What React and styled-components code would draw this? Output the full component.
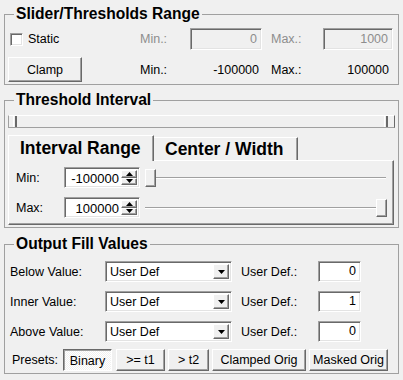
import React from 'react';
import styled, { createGlobalStyle, css } from 'styled-components';

const Global = createGlobalStyle`
  html, body { margin: 0; padding: 0; background: #f0f0f0; }
  body {
    font-family: "Liberation Sans", Arial, sans-serif;
    font-size: 12.5px;
    color: #000;
  }
`;

const Page = styled.div`
  width: 403px;
  height: 380px;
  box-sizing: border-box;
  padding: 6px 4px 0 4px;
  display: flex;
  flex-direction: column;
`;

const Group = styled.fieldset`
  margin: ${p => p.$top || 0}px 0 0 0;
  padding: 0;
  min-width: 0;
  border: 1px solid #a0a0a0;
`;

const Title = styled.legend`
  margin-left: 9px;
  padding: 0 2px;
  font-size: 15.6px;
  font-weight: bold;
  line-height: 16px;
`;

/* ---------- group 1 ---------- */
const RangeGrid = styled.div`
  display: grid;
  grid-template-columns: 132px 50px 72px 9px 52px 70px;
  grid-template-rows: 22px 25px;
  row-gap: 7px;
  align-items: center;
  padding: 6px 0 2px 3px;
`;

const CheckRow = styled.label`
  display: flex;
  align-items: center;
  gap: 5px;
  padding-left: 2px;
`;

const CheckBox = styled.span`
  width: 13px;
  height: 13px;
  box-sizing: border-box;
  background: #fff;
  border: 1px solid;
  border-color: #a0a0a0 #fff #fff #a0a0a0;
  box-shadow: inset 1px 1px 0 #696969, inset -1px -1px 0 #e3e3e3;
`;

const Label = styled.span`
  color: ${p => (p.$disabled ? '#8d8d8d' : '#000')};
  grid-column: ${p => p.$col || 'auto'};
  white-space: nowrap;
`;

const Value = styled.span`
  grid-column: ${p => p.$col || 'auto'};
  text-align: right;
  padding-right: ${p => p.$pr || 3}px;
`;

const sunken = css`
  box-sizing: border-box;
  border: 1px solid;
  border-color: #a0a0a0 #fff #fff #a0a0a0;
  box-shadow: inset 1px 1px 0 #696969, inset -1px -1px 0 #e3e3e3;
`;

const raised = css`
  box-sizing: border-box;
  background: #f0f0f0;
  border: 1px solid;
  border-color: #fff #696969 #696969 #fff;
  box-shadow: inset -1px -1px 0 #a0a0a0;
`;

const Field = styled.div`
  ${sunken};
  grid-column: ${p => p.$col || 'auto'};
  width: ${p => p.$w}px;
  height: ${p => p.$h || 22}px;
  background: ${p => (p.$disabled ? '#f0f0f0' : '#fff')};
  color: ${p => (p.$disabled ? '#8d8d8d' : '#000')};
  text-align: right;
  padding-right: 4px;
  line-height: ${p => (p.$h || 22) - 2}px;
`;

const Button = styled.button`
  ${raised};
  width: ${p => p.$w}px;
  height: ${p => p.$h || 22}px;
  margin-right: ${p => p.$mr || 0}px;
  padding: 0;
  font: inherit;
  color: #000;
  ${p =>
    p.$pressed &&
    css`
      border-color: #696969 #fff #fff #696969;
      box-shadow: inset 1px 1px 0 #a0a0a0;
      background: repeating-conic-gradient(#fff 0 25%, #f0f0f0 0 50%) 0 0 / 2px 2px;
      padding-top: 2px;
    `}
`;

/* ---------- group 2 ---------- */
const IntervalBody = styled.div`
  display: flex;
  flex-direction: column;
  padding: 7px 3px 2px 3px;
`;

const SpanTrack = styled.div`
  display: flex;
  height: 13px;
  box-sizing: border-box;
  border-top: 1px solid #fff;
  border-bottom: 1px solid #a0a0a0;
  border-left: 1px solid #a0a0a0;
  border-right: 1px solid #696969;
  margin-bottom: 7px;
`;

const SpanGap = styled.div`
  width: ${p => p.$w}px;
`;

const SpanFill = styled.div`
  flex: 1;
`;

const SpanHandle = styled.div`
  width: 4px;
  box-sizing: border-box;
  border-left: 1px solid #fff;
  border-right: 2px solid #696969;
`;

const TabBar = styled.div`
  display: flex;
  align-items: flex-end;
  height: 25px;
  position: relative;
  z-index: 1;
`;

const Tab = styled.div`
  box-sizing: border-box;
  height: ${p => (p.$active ? 26 : 23)}px;
  margin-bottom: ${p => (p.$active ? -1 : 0)}px;
  width: ${p => p.$w}px;
  padding-left: 11px;
  background: #f0f0f0;
  border-top: 1px solid #fff;
  border-left: ${p => (p.$active ? '1px solid #fff' : 'none')};
  border-right: 1px solid #696969;
  box-shadow: inset -1px 0 0 #a0a0a0;
  font-size: 17.5px;
  font-weight: bold;
  line-height: ${p => (p.$active ? 25 : 22)}px;
  white-space: nowrap;
`;

const Pane = styled.div`
  margin-right: 1px;
  display: flex;
  flex-direction: column;
  gap: 9px;
  padding: 6px 6px 6px 7px;
  border: 1px solid;
  border-color: #fff #696969 #696969 #fff;
  box-shadow: inset -1px -1px 0 #a0a0a0;
`;

const PaneRow = styled.div`
  display: grid;
  grid-template-columns: 48px 76px 1fr;
  align-items: center;
  height: 21px;
`;

const Spin = styled.div`
  ${sunken};
  display: flex;
  width: 76px;
  height: 21px;
  background: #fff;
  padding: 2px;
`;

const SpinText = styled.span`
  flex: 1;
  text-align: right;
  padding-right: 2px;
  font-size: 13px;
  line-height: 17px;
`;

const SpinButtons = styled.div`
  display: flex;
  flex-direction: column;
  width: 16px;
`;

const SpinButton = styled.div`
  ${raised};
  flex: 1;
  display: flex;
  align-items: center;
  justify-content: center;
`;

const Slider = styled.div`
  display: flex;
  align-items: center;
  height: 21px;
  margin-left: 5px;
  margin-right: ${p => (p.$end ? 0 : 1)}px;
`;

const Groove = styled.div`
  flex: 1;
  height: 2px;
  box-sizing: border-box;
  border-top: 1px solid #a0a0a0;
  border-bottom: 1px solid #fff;
`;

const Handle = styled.div`
  ${raised};
  width: 11px;
  height: 18px;
`;

/* ---------- group 3 ---------- */
const FillBody = styled.div`
  display: flex;
  flex-direction: column;
  gap: 9px;
  padding: 9px 0 2px 5px;
`;

const FillRow = styled.div`
  display: grid;
  grid-template-columns: 95px 127px 9px 77px 43px;
  align-items: center;
  height: 21px;
`;

const Combo = styled.div`
  ${sunken};
  display: flex;
  width: 127px;
  height: 21px;
  background: #fff;
  padding: 2px;
`;

const ComboText = styled.span`
  flex: 1;
  padding-left: 2px;
  line-height: 17px;
`;

const ComboButton = styled.div`
  ${raised};
  width: 16px;
  display: flex;
  align-items: center;
  justify-content: center;
`;

const PresetRow = styled.div`
  display: flex;
  align-items: center;
  gap: 3px;
  margin-top: -2px;
  padding-left: 2px;
`;

const PresetLabel = styled.span`
  width: 48px;
`;

const Arrow = ({ up }) => (
  <svg width="7" height="4" viewBox="0 0 7 4">
    <path d={up ? 'M0 4 L3.5 0 L7 4 Z' : 'M0 0 L7 0 L3.5 4 Z'} fill="#000" />
  </svg>
);

function SpinBox({ value }) {
  return (
    <Spin>
      <SpinText>{value}</SpinText>
      <SpinButtons>
        <SpinButton><Arrow up /></SpinButton>
        <SpinButton><Arrow /></SpinButton>
      </SpinButtons>
    </Spin>
  );
}

function FillLine({ label, value }) {
  return (
    <FillRow>
      <Label>{label}</Label>
      <Combo>
        <ComboText>User Def</ComboText>
        <ComboButton><Arrow /></ComboButton>
      </Combo>
      <Label $col={4}>User Def.:</Label>
      <Field $w={43} $h={21}>{value}</Field>
    </FillRow>
  );
}

export default function App() {
  return (
    <Page>
      <Global />
      <Group>
        <Title>Slider/Thresholds Range</Title>
        <RangeGrid>
          <CheckRow>
            <CheckBox />
            Static
          </CheckRow>
          <Label $disabled>Min.:</Label>
          <Field $w={72} $disabled>0</Field>
          <Label $disabled $col={5}>Max.:</Label>
          <Field $w={70} $disabled>1000</Field>

          <Button $w={74} $h={25}>Clamp</Button>
          <Label>Min.:</Label>
          <Value $pr={3}>-100000</Value>
          <Label $col={5}>Max.:</Label>
          <Value $pr={4}>100000</Value>
        </RangeGrid>
      </Group>

      <Group $top={7}>
        <Title>Threshold Interval</Title>
        <IntervalBody>
          <SpanTrack>
            <SpanGap $w={4} />
            <SpanHandle />
            <SpanFill />
            <SpanHandle />
            <SpanGap $w={6} />
          </SpanTrack>
          <TabBar>
            <Tab $active $w={146}>Interval Range</Tab>
            <Tab $w={144}>Center / Width</Tab>
          </TabBar>
          <Pane>
            <PaneRow>
              <Label>Min:</Label>
              <SpinBox value="-100000" />
              <Slider>
                <Handle />
                <Groove />
              </Slider>
            </PaneRow>
            <PaneRow>
              <Label>Max:</Label>
              <SpinBox value="100000" />
              <Slider $end>
                <Groove />
                <Handle />
              </Slider>
            </PaneRow>
          </Pane>
        </IntervalBody>
      </Group>

      <Group $top={8}>
        <Title>Output Fill Values</Title>
        <FillBody>
          <FillLine label="Below Value:" value="0" />
          <FillLine label="Inner Value:" value="1" />
          <FillLine label="Above Value:" value="0" />
          <PresetRow>
            <PresetLabel>Presets:</PresetLabel>
            <Button $w={49} $mr={1} $pressed>Binary</Button>
            <Button $w={49}>&gt;= t1</Button>
            <Button $w={41}>&gt; t2</Button>
            <Button $w={94}>Clamped Orig</Button>
            <Button $w={79}>Masked Orig</Button>
          </PresetRow>
        </FillBody>
      </Group>
    </Page>
  );
}
